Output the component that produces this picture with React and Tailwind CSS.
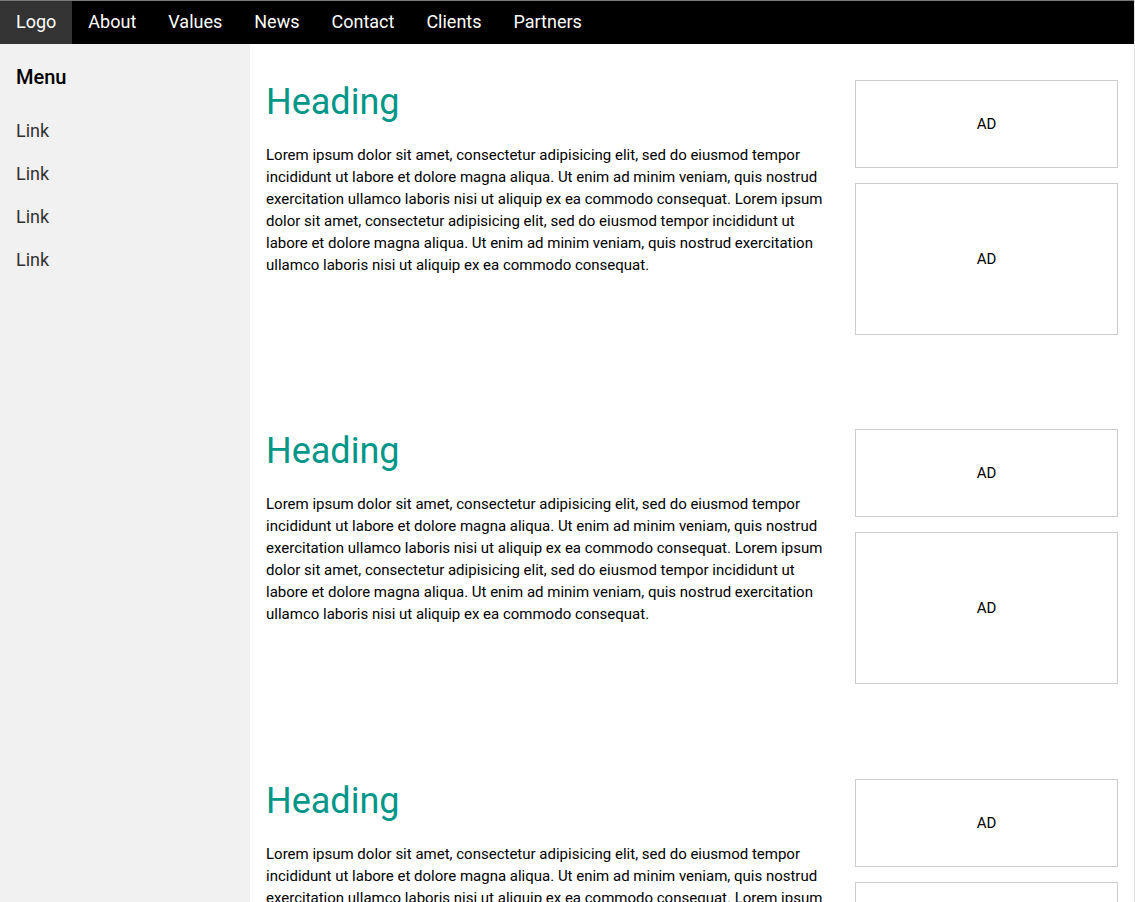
const navItems = ['About', 'Values', 'News', 'Contact', 'Clients', 'Partners'];
const lorem =
  'Lorem ipsum dolor sit amet, consectetur adipisicing elit, sed do eiusmod tempor incididunt ut labore et dolore magna aliqua. Ut enim ad minim veniam, quis nostrud exercitation ullamco laboris nisi ut aliquip ex ea commodo consequat. Lorem ipsum dolor sit amet, consectetur adipisicing elit, sed do eiusmod tempor incididunt ut labore et dolore magna aliqua. Ut enim ad minim veniam, quis nostrud exercitation ullamco laboris nisi ut aliquip ex ea commodo consequat.';

function Section({ tall }) {
  return (
    <div className={tall ? 'flex h-[350px]' : 'flex h-[349px]'}>
      <div className="w-[573px]">
        <h1 className="mt-[11px] text-[36px] leading-[54px] text-[#009688]">Heading</h1>
        <p className="mt-[15px] text-[15px] leading-[22px] text-black">{lorem}</p>
      </div>
      <div className="ml-4 w-[263px] pt-4">
        <div className="flex h-[88px] items-center justify-center border border-[#ccc] text-[15px]">AD</div>
        <div className="mt-[15px] flex h-[152px] items-center justify-center border border-[#ccc] text-[15px]">AD</div>
      </div>
    </div>
  );
}

export default function App() {
  return (
    <div className="flex min-h-[902px] w-[1135px] flex-col border-r border-[#e3e3e3] font-['Roboto',sans-serif]">
      <nav className="flex h-[44px] border-t border-[#7a7a7a] bg-black text-[18px] leading-[27px] text-white">
        <a className="bg-[#333] px-4 pt-[7px] pb-[9px]">Logo</a>
        {navItems.map((n) => (
          <a key={n} className="px-4 pt-[7px] pb-[9px]">{n}</a>
        ))}
      </nav>
      <div className="flex flex-1">
        <aside className="w-[250px] shrink-0 bg-[#f1f1f1]">
          <h4 className="mt-[10px] mb-[9px] px-4 py-2 text-[20px] font-medium leading-[30px] text-black">Menu</h4>
          {[1, 2, 3, 4].map((i) => (
            <a key={i} className="block px-4 py-2 text-[18px] leading-[27px] text-[#333]">Link</a>
          ))}
        </aside>
        <main className="h-[858px] overflow-hidden pl-4 pt-5">
          <Section />
          <Section tall />
          <Section />
        </main>
      </div>
    </div>
  );
}
